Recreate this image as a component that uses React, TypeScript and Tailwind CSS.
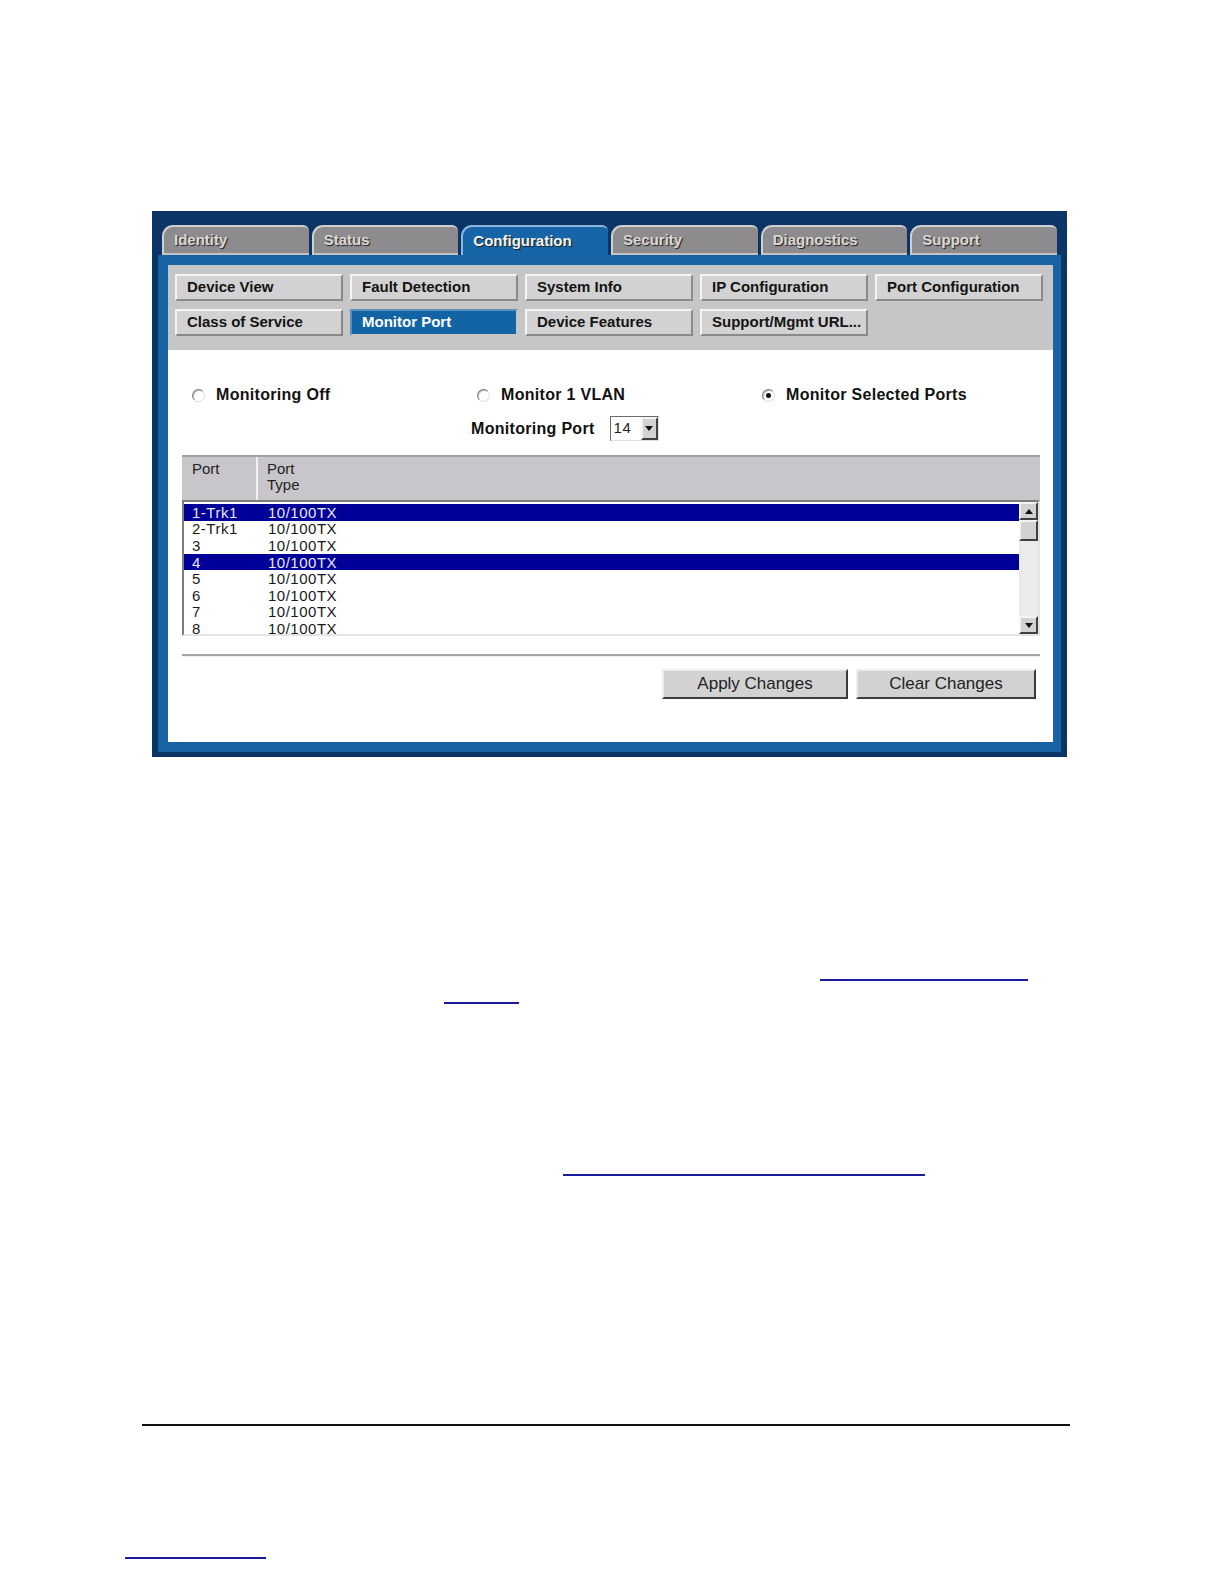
import React from "react";

const tabs = ["Identity", "Status", "Configuration", "Security", "Diagnostics", "Support"];

const subnav = [
  "Device View",
  "Fault Detection",
  "System Info",
  "IP Configuration",
  "Port Configuration",
  "Class of Service",
  "Monitor Port",
  "Device Features",
  "Support/Mgmt URL...",
];

const ports = [
  { port: "1-Trk1", sel: true },
  { port: "2-Trk1", sel: false },
  { port: "3", sel: false },
  { port: "4", sel: true },
  { port: "5", sel: false },
  { port: "6", sel: false },
  { port: "7", sel: false },
  { port: "8", sel: false },
];

const font = { fontFamily: '"Liberation Sans", Arial, sans-serif' };

function Radio({ checked, label }: { checked?: boolean; label: string }) {
  return (
    <div className="flex items-center gap-[11px]">
      <span className="flex h-[13px] w-[13px] items-center justify-center rounded-full border border-t-[#7a7a7a] border-l-[#7a7a7a] border-r-[#dcdcdc] border-b-[#dcdcdc] bg-white shadow-[inset_1px_1px_0_#bdbdbd]">
        {checked && <span className="h-[5px] w-[5px] rounded-full bg-[#111]" />}
      </span>
      <span className="text-[16px] font-bold tracking-[0.3px] text-[#111]">{label}</span>
    </div>
  );
}

function Arrow({ up }: { up?: boolean }) {
  return (
    <svg width="8" height="5" viewBox="0 0 8 5">
      <path d={up ? "M0 5 L4 0 L8 5 Z" : "M0 0 L8 0 L4 5 Z"} fill="#111" />
    </svg>
  );
}

export default function App() {
  return (
    <div className="min-h-[1584px] w-[1224px] bg-white pl-[152px] pt-[211px]" style={font}>
      {/* device frame */}
      <div className="flex h-[546px] w-[915px] flex-col bg-[#0b3467]">
        <div className="flex gap-[3px] px-[10px] pt-[14px]">
          {tabs.map((t) => {
            const active = t === "Configuration";
            return (
              <div
                key={t}
                className={`flex h-[30px] w-[148px] items-center rounded-tl-[11px] rounded-tr-[6px] border-l-2 border-t-2 pl-[10px] text-[15px] font-bold [text-shadow:1px_1px_1px_#1e1e1e] ${
                  active
                    ? "border-l-[#8fb9dc] border-t-[#8fb9dc] bg-[#1765a6] text-[#f4f4f4]"
                    : "border-b-2 border-b-[#c4c4c4] border-l-[#cfcfcf] border-t-[#cfcfcf] bg-[#8d8b8d] text-[#d9d9d9]"
                }`}
              >
                {t}
              </div>
            );
          })}
        </div>

        <div className="mx-[6px] mb-[5px] flex flex-1 flex-col bg-[#1763a4] pb-[10px] pl-[10px] pr-[8px] pt-[10px]">
          {/* sub navigation */}
          <div className="bg-[#c6c6c6] pb-[14px] pl-[7px] pt-[9px]">
            <div className="grid grid-cols-[repeat(5,168px)] gap-x-[7px] gap-y-[8px]">
              {subnav.map((s) => {
                const active = s === "Monitor Port";
                return (
                  <div
                    key={s}
                    className={`flex h-[27px] items-center border-2 pl-[10px] text-[15px] font-bold ${
                      active
                        ? "border-b-[#c6c6c6] border-l-[#5f8fb8] border-r-[#c6c6c6] border-t-[#5f8fb8] bg-[#1264a5] text-white"
                        : "border-b-[#8a8a8a] border-l-[#f4f4f4] border-r-[#8a8a8a] border-t-[#f4f4f4] bg-[#d2d2d2] text-[#141414]"
                    }`}
                  >
                    {s}
                  </div>
                );
              })}
            </div>
          </div>

          {/* content */}
          <div className="flex flex-1 flex-col bg-white">
            <div className="grid grid-cols-[285px_285px_285px] pl-[24px] pt-[33px]">
              <Radio label="Monitoring Off" />
              <Radio label="Monitor 1 VLAN" />
              <Radio checked label="Monitor Selected Ports" />
            </div>

            <div className="mt-[9px] flex items-center pl-[303px]">
              <span className="text-[16px] font-bold tracking-[0.3px] text-[#111]">Monitoring Port</span>
              <div className="ml-[15px] flex h-[25px] w-[49px] border border-b-[#e0e0e0] border-l-[#6a6a6a] border-r-[#e0e0e0] border-t-[#6a6a6a] bg-white">
                <span className="flex flex-1 items-center pl-[3px] text-[15px] tracking-[0.5px] text-[#222]">14</span>
                <span className="flex w-[17px] items-center justify-center border-2 border-b-[#404040] border-l-[#f2f2f2] border-r-[#404040] border-t-[#f2f2f2] bg-[#d2d2d2]">
                  <Arrow />
                </span>
              </div>
            </div>

            {/* port table */}
            <div className="ml-[14px] mt-[14px] w-[858px]">
              <div className="flex h-[45px] border-t-2 border-t-[#a2a2a2] bg-[#c8c6cb] text-[15px] leading-[16px] text-[#222]">
                <div className="w-[76px] border-r-2 border-r-[#f0f0f0] pl-[10px] pt-[4px]">Port</div>
                <div className="pl-[9px] pt-[4px]">
                  Port
                  <br />
                  Type
                </div>
              </div>
              <div className="flex h-[136px] border-2 border-b-[#e4e4e4] border-l-[#7c7c7c] border-r-[#e4e4e4] border-t-[#7c7c7c] bg-white">
                <div className="flex-1 overflow-hidden pt-[2px]">
                  {ports.map((p) => (
                    <div
                      key={p.port}
                      className={`flex h-[16.6px] items-center text-[15px] leading-[15px] tracking-[0.5px] ${
                        p.sel ? "bg-[#000099] text-[#e8e8ff]" : "text-[#1a1a1a]"
                      }`}
                    >
                      <span className="w-[84px] pl-[8px]">{p.port}</span>
                      <span>10/100TX</span>
                    </div>
                  ))}
                </div>
                <div className="flex w-[19px] flex-col bg-[#ebebeb]">
                  <div className="flex h-[18px] items-center justify-center border-2 border-b-[#404040] border-l-[#f4f4f4] border-r-[#404040] border-t-[#f4f4f4] bg-[#d2d2d2]">
                    <Arrow up />
                  </div>
                  <div className="h-[21px] border-2 border-b-[#404040] border-l-[#f4f4f4] border-r-[#404040] border-t-[#f4f4f4] bg-[#d2d2d2]" />
                  <div className="flex-1" />
                  <div className="flex h-[18px] items-center justify-center border-2 border-b-[#404040] border-l-[#f4f4f4] border-r-[#404040] border-t-[#f4f4f4] bg-[#d2d2d2]">
                    <Arrow />
                  </div>
                </div>
              </div>
            </div>

            <div className="ml-[14px] mt-[18px] h-[3px] w-[858px] border-b border-t-2 border-b-[#f2f2f2] border-t-[#a4a4a4]" />

            <div className="mt-[12px] flex gap-[8px] pl-[494px]">
              <div className="flex h-[30px] w-[186px] items-center justify-center border-2 border-b-[#3c3c3c] border-l-[#ececec] border-r-[#3c3c3c] border-t-[#ececec] bg-[#d2d2d2] text-[17px] text-[#222]">
                Apply Changes
              </div>
              <div className="flex h-[30px] w-[180px] items-center justify-center border-2 border-b-[#3c3c3c] border-l-[#ececec] border-r-[#3c3c3c] border-t-[#ececec] bg-[#d2d2d2] text-[17px] text-[#222]">
                Clear Changes
              </div>
            </div>
          </div>
        </div>
      </div>

      {/* document links and rules below the screenshot */}
      <div className="ml-[668px] mt-[222px] h-[2px] w-[208px] bg-[#1b1b9e]" />
      <div className="ml-[292px] mt-[21px] h-[2px] w-[75px] bg-[#1b1b9e]" />
      <div className="ml-[411px] mt-[170px] h-[2px] w-[362px] bg-[#1b1b9e]" />
      <div className="-ml-[10px] mt-[248px] h-[2px] w-[928px] bg-[#111]" />
      <div className="-ml-[27px] mt-[131px] h-[2px] w-[141px] bg-[#1b1b9e]" />
    </div>
  );
}
